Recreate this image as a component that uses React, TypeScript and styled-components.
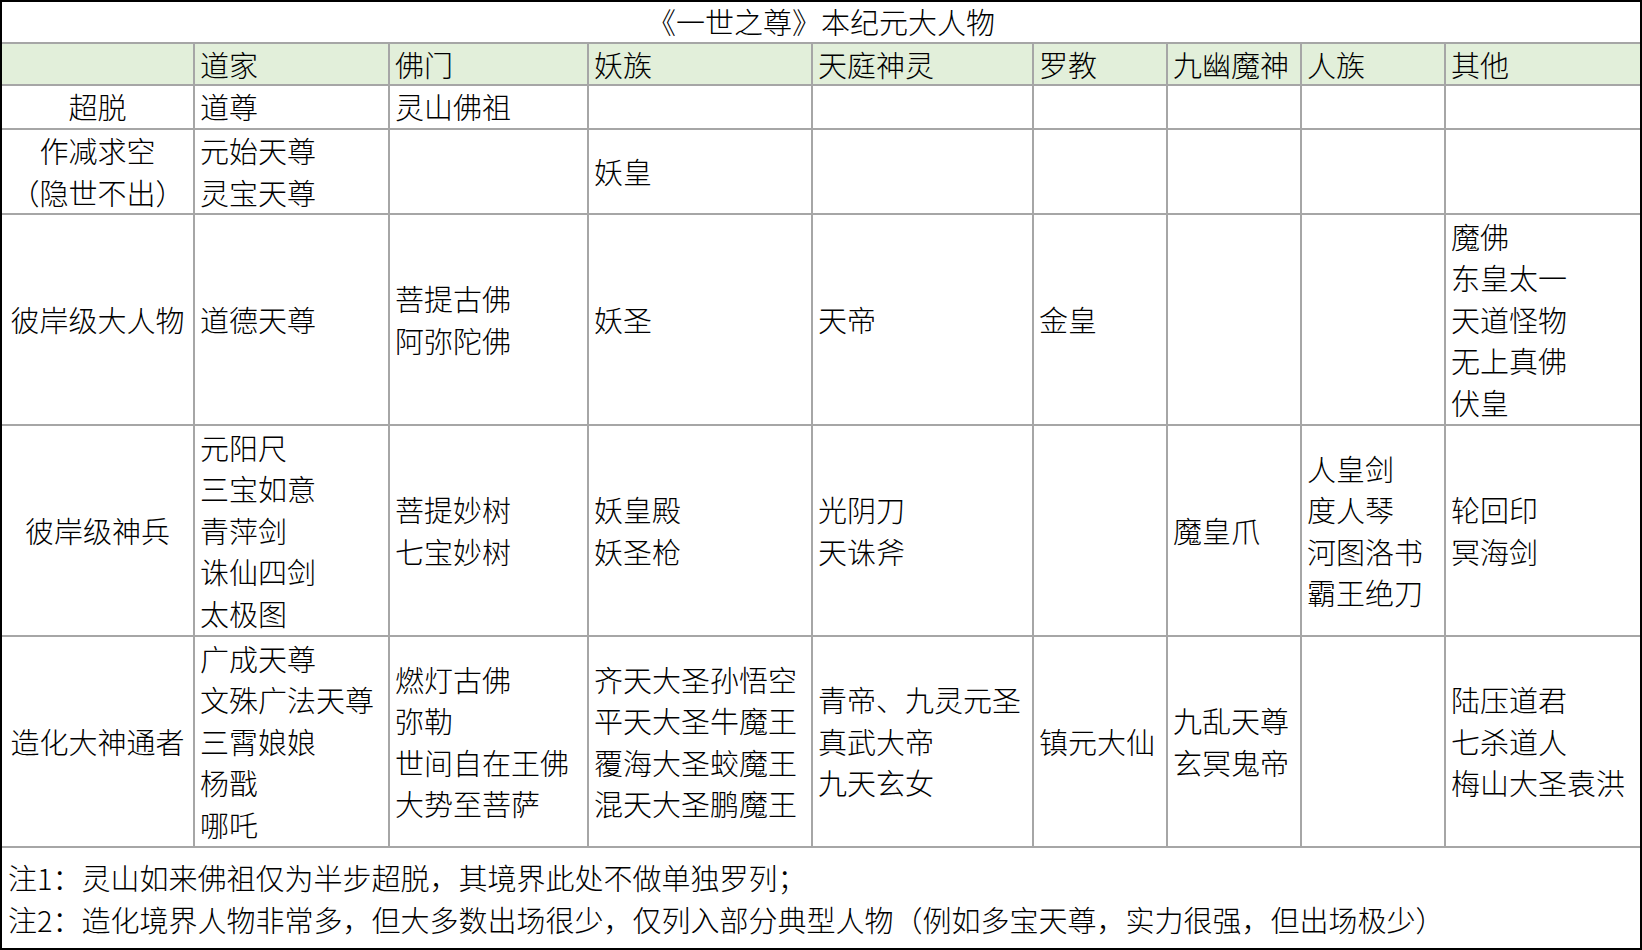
import React from 'react';
import styled, {createGlobalStyle} from "styled-components";

const GlobalStyle = createGlobalStyle`
  html, body {
    margin: 0;
    padding: 0;
    background: #ffffff;
  }
  body {
    font-family: "Noto Sans CJK SC", "Noto Sans", sans-serif;
    color: #000000;
  }
`

const colWidths = [193, 195, 199, 224, 221, 134, 134, 144, 194]

const headers = ["道家", "佛门", "妖族", "天庭神灵", "罗教", "九幽魔神", "人族", "其他"]

type Row = {
    label: string[]
    height: number
    cells: string[][]
}

const rows: Row[] = [
    {
        label: ["超脱"],
        height: 44,
        cells: [["道尊"], ["灵山佛祖"], [], [], [], [], [], []],
    },
    {
        label: ["作减求空", "（隐世不出）"],
        height: 85,
        cells: [["元始天尊", "灵宝天尊"], [], ["妖皇"], [], [], [], [], []],
    },
    {
        label: ["彼岸级大人物"],
        height: 211,
        cells: [
            ["道德天尊"],
            ["菩提古佛", "阿弥陀佛"],
            ["妖圣"],
            ["天帝"],
            ["金皇"],
            [],
            [],
            ["魔佛", "东皇太一", "天道怪物", "无上真佛", "伏皇"],
        ],
    },
    {
        label: ["彼岸级神兵"],
        height: 211,
        cells: [
            ["元阳尺", "三宝如意", "青萍剑", "诛仙四剑", "太极图"],
            ["菩提妙树", "七宝妙树"],
            ["妖皇殿", "妖圣枪"],
            ["光阴刀", "天诛斧"],
            [],
            ["魔皇爪"],
            ["人皇剑", "度人琴", "河图洛书", "霸王绝刀"],
            ["轮回印", "冥海剑"],
        ],
    },
    {
        label: ["造化大神通者"],
        height: 211,
        cells: [
            ["广成天尊", "文殊广法天尊", "三霄娘娘", "杨戬", "哪吒"],
            ["燃灯古佛", "弥勒", "世间自在王佛", "大势至菩萨"],
            ["齐天大圣孙悟空", "平天大圣牛魔王", "覆海大圣蛟魔王", "混天大圣鹏魔王"],
            ["青帝、九灵元圣", "真武大帝", "九天玄女"],
            ["镇元大仙"],
            ["九乱天尊", "玄冥鬼帝"],
            [],
            ["陆压道君", "七杀道人", "梅山大圣袁洪"],
        ],
    },
]

const notes = [
    "注1：灵山如来佛祖仅为半步超脱，其境界此处不做单独罗列；",
    "注2：造化境界人物非常多，但大多数出场很少，仅列入部分典型人物（例如多宝天尊，实力很强，但出场极少）",
]

export default function App() {
    return (
        <>
            <GlobalStyle/>
            <Sheet>
                <colgroup>
                    {colWidths.map((w, i) => <col key={i} style={{width: w}}/>)}
                </colgroup>
                <tbody>
                <Line height={42}>
                    <TitleCell colSpan={9}>《一世之尊》本纪元大人物</TitleCell>
                </Line>
                <Line height={42}>
                    <HeadCell/>
                    {headers.map(h => <HeadCell key={h}>{h}</HeadCell>)}
                </Line>
                {rows.map(row => (
                    <Line key={row.label[0]} height={row.height}>
                        <LabelCell>
                            {row.label.map(t => <TextLine key={t}>{t}</TextLine>)}
                        </LabelCell>
                        {row.cells.map((c, i) => (
                            <Cell key={i}>
                                {c.map(t => <TextLine key={t}>{t}</TextLine>)}
                            </Cell>
                        ))}
                    </Line>
                ))}
                <Line height={100}>
                    <NoteCell colSpan={9}>
                        {notes.map(n => <NoteLine key={n}>{n}</NoteLine>)}
                    </NoteCell>
                </Line>
                </tbody>
            </Sheet>
        </>
    );
}

const Sheet = styled.table`
  width: 1642px;
  table-layout: fixed;
  border-collapse: separate;
  border-spacing: 0;
  border: 2px solid #000000;
  font-size: 29px;
  font-weight: 300;
  color: #000000;
`

const Line = styled.tr<{ height: number }>`
  height: ${p => p.height}px;
`

const BaseCell = styled.td`
  box-sizing: border-box;
  padding: 0 4px 0 5px;
  border-right: 2px solid #a6a6a6;
  border-bottom: 2px solid #a6a6a6;
  vertical-align: middle;
  text-align: left;
  white-space: nowrap;
  line-height: 41.6px;

  &:last-child {
    border-right: none;
  }
`

const TitleCell = styled(BaseCell)`
  text-align: center;
  vertical-align: top;
  line-height: 38px;
  padding: 0;
`

const HeadCell = styled(BaseCell).attrs({as: "th"})`
  background-color: #e2efda;
  font-weight: 300;
  line-height: 40px;
  text-align: left;
`

const LabelCell = styled(BaseCell)`
  text-align: center;
  padding: 0;
`

const Cell = styled(BaseCell)``

const TextLine = styled.div`
  line-height: 41.6px;
`

const NoteCell = styled(BaseCell)`
  border-bottom: none;
  vertical-align: top;
  padding: 8px 6px 8px 6px;
`

const NoteLine = styled.div`
  line-height: 42px;
`
